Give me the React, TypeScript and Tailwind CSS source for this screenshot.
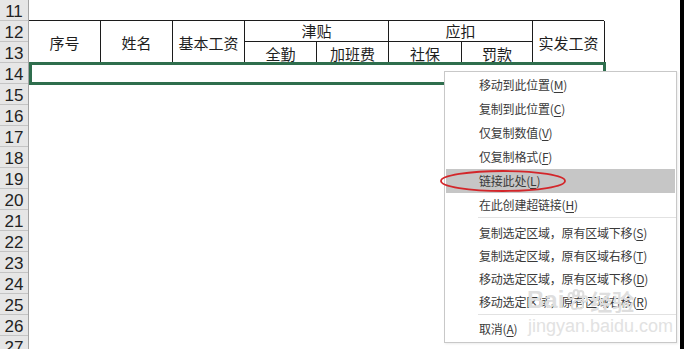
import React from 'react';

const rowNumbers = [11, 12, 13, 14, 15, 16, 17, 18, 19, 20, 21, 22, 23, 24, 25, 26, 27];

type MenuItem = { label: string; key: string; active?: boolean };

const groupA: MenuItem[] = [
  { label: '移动到此位置', key: 'M' },
  { label: '复制到此位置', key: 'C' },
  { label: '仅复制数值', key: 'V' },
  { label: '仅复制格式', key: 'F' },
  { label: '链接此处', key: 'L', active: true },
  { label: '在此创建超链接', key: 'H' },
];

const groupB: MenuItem[] = [
  { label: '复制选定区域，原有区域下移', key: 'S' },
  { label: '复制选定区域，原有区域右移', key: 'T' },
  { label: '移动选定区域，原有区域下移', key: 'D' },
  { label: '移动选定区域，原有区域右移', key: 'R' },
];

function MenuRow({ item, tall }: { item: MenuItem; tall?: boolean }) {
  return (
    <div
      className={`flex items-center pl-[33px] mx-px ${tall ? 'h-[24px]' : 'h-[23px]'} ${
        item.active ? 'bg-[#c6c6c6]' : ''
      }`}
    >
      <span className="text-[12px] text-[#3a3a3a] leading-none tracking-[-0.2px]">
        {item.label}(<span className="underline underline-offset-2">{item.key}</span>)
      </span>
    </div>
  );
}

function ContextMenu() {
  return (
    <div className="absolute left-[444px] top-[71px] w-[233px] h-[272px] bg-white border border-[#c8c8c8] pt-px shadow-[1px_1px_2px_rgba(0,0,0,0.08)]">
      {groupA.map((item) => (
        <MenuRow key={item.key} item={item} tall />
      ))}
      <div className="ml-[33px] h-px bg-[#e2e2e2] mb-[3px]" />
      {groupB.map((item) => (
        <MenuRow key={item.key} item={item} />
      ))}
      <div className="ml-[33px] h-px bg-[#e2e2e2] mt-px mb-[2px]" />
      <MenuRow item={{ label: '取消', key: 'A' }} />

      {/* red marker round 链接此处 */}
      <svg className="absolute left-[-4px] top-[97px] overflow-visible" width="130" height="24" viewBox="0 0 130 24">
        <ellipse cx="62" cy="12" rx="62" ry="10" fill="none" stroke="#d3262a" strokeWidth="1.8" />
      </svg>

      {/* watermark */}
      <div className="absolute left-[82px] top-[216px] flex items-center gap-[2px] text-[#dedede] select-none">
        <span className="text-[24px] font-bold leading-none font-['Liberation_Sans']">Bai</span>
        <svg width="22" height="22" viewBox="0 0 22 22">
          <g fill="none" stroke="#dedede" strokeWidth="2">
            <ellipse cx="5" cy="7" rx="2.4" ry="3" />
            <ellipse cx="10" cy="4" rx="2.4" ry="3" />
            <ellipse cx="15" cy="5" rx="2.4" ry="3" />
            <ellipse cx="19" cy="10" rx="2.2" ry="2.8" />
            <path d="M6 18c0-4 3-7 6-7s5 3 5 6c0 3-3 3-5 2-2 1-6 2-6-1z" />
          </g>
        </svg>
        <span className="text-[22px] font-bold leading-none">经验</span>
      </div>
      <div className="absolute left-[83px] top-[245px] text-[18px] leading-none text-[#e2e2e2] font-['Liberation_Sans'] select-none">
        jingyan.baidu.com
      </div>
    </div>
  );
}

function HeaderCell({ children, className = '' }: { children?: React.ReactNode; className?: string }) {
  return (
    <div className={`flex items-center justify-center border-r border-[#1c1c1c] text-[15px] text-[#1e1e1e] ${className}`}>
      {children}
    </div>
  );
}

export default function App() {
  return (
    <div className="relative w-[684px] h-[349px] overflow-hidden bg-white flex font-['Noto_Sans_CJK_SC',sans-serif]">
      {/* row numbers */}
      <div className="w-[29px] shrink-0 bg-[#e6e6e6] border-r border-[#a3a3a3]">
        {rowNumbers.map((n) => (
          <div
            key={n}
            className="h-[21px] border-b border-[#c4c4c4] flex items-center justify-center text-[17px] text-[#222] font-['Liberation_Sans'] leading-none pt-[2px]"
          >
            {n}
          </div>
        ))}
      </div>

      {/* sheet */}
      <div className="flex-1 relative">
        <div className="h-[20px]" />
        <div className="grid grid-cols-[72px_72px_72px_72px_72px_73px_71px_72px] grid-rows-[21px_21px] w-[575px] border-t border-b border-[#1c1c1c]">
          <HeaderCell className="row-span-2 pt-[2px]">序号</HeaderCell>
          <HeaderCell className="row-span-2 pt-[2px]">姓名</HeaderCell>
          <HeaderCell className="row-span-2 pt-[2px]">基本工资</HeaderCell>
          <HeaderCell className="col-span-2 border-b pt-[1px]">津贴</HeaderCell>
          <HeaderCell className="col-span-2 border-b pt-[1px]">应扣</HeaderCell>
          <HeaderCell className="row-span-2 pt-[2px]">实发工资</HeaderCell>
          <HeaderCell className="pt-[3px]">全勤</HeaderCell>
          <HeaderCell className="pt-[3px]">加班费</HeaderCell>
          <HeaderCell className="pt-[3px]">社保</HeaderCell>
          <HeaderCell className="pt-[3px]">罚款</HeaderCell>
        </div>

        {/* selected row 14 */}
        <div className="absolute left-0 top-[62px] w-[577px] h-[23px] border-[3px] border-[#2f6e4d]" />
      </div>

      <div className="w-[4px] shrink-0 bg-black" />

      <ContextMenu />
    </div>
  );
}
